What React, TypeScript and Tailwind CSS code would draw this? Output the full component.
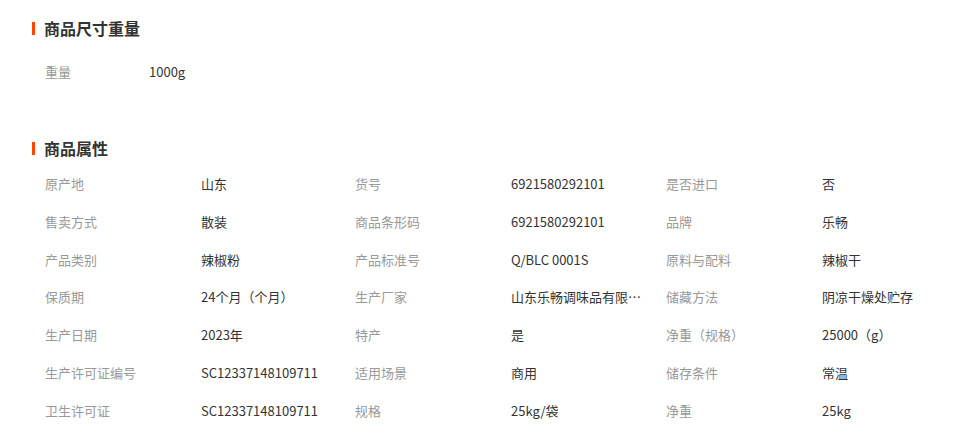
const sizeRows = [{ label: "重量", value: "1000g" }]

const attrs: [string, string][] = [
  ["原产地", "山东"],
  ["货号", "6921580292101"],
  ["是否进口", "否"],
  ["售卖方式", "散装"],
  ["商品条形码", "6921580292101"],
  ["品牌", "乐畅"],
  ["产品类别", "辣椒粉"],
  ["产品标准号", "Q/BLC 0001S"],
  ["原料与配料", "辣椒干"],
  ["保质期", "24个月（个月）"],
  ["生产厂家", "山东乐畅调味品有限公司"],
  ["储藏方法", "阴凉干燥处贮存"],
  ["生产日期", "2023年"],
  ["特产", "是"],
  ["净重（规格）", "25000（g）"],
  ["生产许可证编号", "SC12337148109711"],
  ["适用场景", "商用"],
  ["储存条件", "常温"],
  ["卫生许可证", "SC12337148109711"],
  ["规格", "25kg/袋"],
  ["净重", "25kg"],
]

function Heading({ title }: { title: string }) {
  return (
    <h2 className="flex h-6 items-center text-base font-bold text-[#333]">
      <span className="mr-[9px] h-[13px] w-[3px] bg-[#ff4400]"></span>
      {title}
    </h2>
  )
}

export default function App() {
  return (
    <div className="h-[436px] w-[980px] bg-white pl-[32px] pt-4 font-['Noto_Sans_CJK_SC',sans-serif]">
      {/* 商品尺寸重量 */}
      <section>
        <Heading title="商品尺寸重量" />
        {sizeRows.map((r) => (
          <div key={r.label} className="mt-[13px] flex h-[38px] items-center pl-[13px] text-[13px]">
            <span className="w-[104px] text-[#999]">{r.label}</span>
            <span className="text-[#333]">{r.value}</span>
          </div>
        ))}
      </section>

      {/* 商品属性 */}
      <section className="mt-[45px]">
        <Heading title="商品属性" />
        <div className="mt-[5px] grid grid-cols-[156px_154px_156px_155px_156px_1fr] pl-[13px] text-[13px]">
          {attrs.map(([label, value]) => (
            <div key={label} className="contents">
              <div className="flex h-[37.75px] items-center text-[#999]">{label}</div>
              <div className="flex h-[37.75px] items-center text-[#333]">
                <span className="block max-w-[131px] overflow-hidden text-ellipsis whitespace-nowrap" title={value}>
                  {value}
                </span>
              </div>
            </div>
          ))}
        </div>
      </section>
    </div>
  )
}
